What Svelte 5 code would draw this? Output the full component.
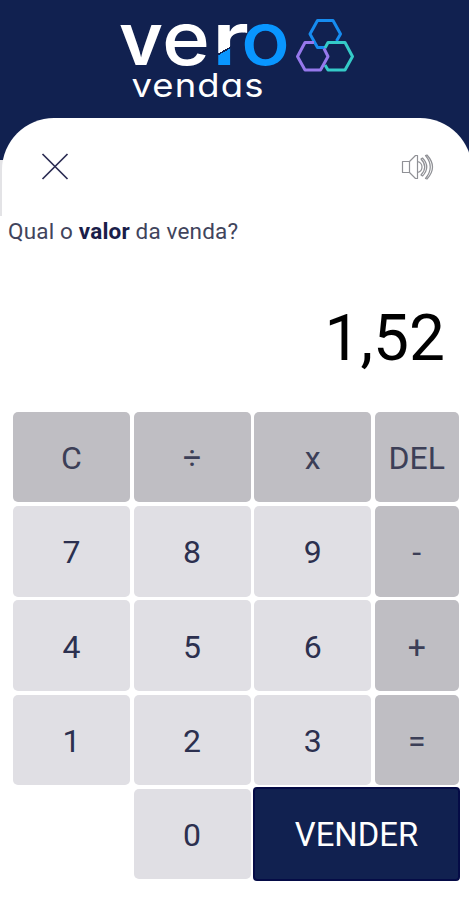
<script>
    const keys = [
        { label: 'C', dark: true },
        { label: '÷', dark: true },
        { label: 'x', dark: true },
        { label: 'DEL', dark: true },
        { label: '7' },
        { label: '8' },
        { label: '9' },
        { label: '-', dark: true },
        { label: '4' },
        { label: '5' },
        { label: '6' },
        { label: '+', dark: true },
        { label: '1' },
        { label: '2' },
        { label: '3' },
        { label: '=', dark: true },
    ];

    let value = '1,52';
</script>

<style>
    :global(body) {
        background: #fff;
    }

    .app {
        width: 469px;
        height: 900px;
        overflow: hidden;
        background: #fff;
        font-family: Roboto, "Liberation Sans", sans-serif;
        color: #20244a;
    }

    header {
        height: 118px;
        background: #112150;
    }

    header svg {
        display: block;
        overflow: visible;
    }

    /* cv11 is the single-storey "a" */
    .logo {
        font-family: Inter, sans-serif;
        font-feature-settings: "cv11";
    }

    /* navy behind the rounded corners, then a thin grey edge on the left */
    .sheet {
        height: 98px;
        background: linear-gradient(#112150 42px, #e3e3e6 42px);
    }

    .bar {
        display: flex;
        justify-content: space-between;
        box-sizing: border-box;
        height: 98px;
        margin-left: 2px;
        margin-right: -3px;
        padding: 34px 36px 0 38px;
        border-radius: 52px 52px 0 0;
        background: #fff;
    }

    .icon {
        height: 30px;
        padding: 0;
        border: none;
        background: none;
    }

    .icon svg {
        display: block;
    }

    .question {
        margin: 0;
        padding: 2px 0 0 8px;
        font-size: 22.5px;
        line-height: 26px;
        letter-spacing: 0.17px;
        white-space: nowrap;
        color: #41445c;
    }

    .question b {
        color: #1a1d49;
    }

    .value {
        height: 168px;
        padding-right: 24px;
        font-size: 64px;
        line-height: 190px;
        text-align: right;
        color: #000;
    }

    .keypad {
        display: grid;
        grid-template-columns: 117px 117px 117px 84px;
        grid-auto-rows: 90.4px;
        gap: 3.8px 3.6px;
        padding-left: 13px;
    }

    .key {
        padding: 2px 0 0;
        border: none;
        border-radius: 5px;
        background: #e0dfe4;
        font: inherit;
        font-size: 32px;
        line-height: 88px;
        color: #2c304f;
    }

    .key.dark {
        background: #bfbec3;
        color: #3c3f57;
    }

    .zero {
        grid-column: 2;
    }

    .sell {
        grid-column: 3 / 5;
        margin: -2px -1.5px;
        padding: 3px 0 0;
        border: 2px solid #050b46;
        border-radius: 4px;
        background: #112150;
        font: inherit;
        font-size: 32.8px;
        color: #fff;
    }
</style>

<div class="app">
    <header>
        <svg class="logo" width="469" height="118" viewBox="0 0 469 118">
            <defs>
                <linearGradient id="stem" gradientUnits="userSpaceOnUse" x1="220" y1="45" x2="228" y2="59">
                    <stop offset="0.4" stop-color="#fff" />
                    <stop offset="0.4" stop-color="#112150" />
                    <stop offset="0.5" stop-color="#112150" />
                    <stop offset="0.5" stop-color="#0996ff" />
                </linearGradient>
            </defs>
            <g font-size="74" font-weight="500" fill="#fff">
                <text x="119" y="65" font-weight="600" textLength="44" lengthAdjust="spacingAndGlyphs">v</text>
                <text x="162" y="65" textLength="48" lengthAdjust="spacingAndGlyphs">e</text>
                <text x="212" y="65" font-weight="600" textLength="37" lengthAdjust="spacingAndGlyphs" fill="url(#stem)">r</text>
                <text x="241" y="65" textLength="49" lengthAdjust="spacingAndGlyphs" fill="#0996ff">o</text>
            </g>
            <text x="131.500" y="97" font-size="33" letter-spacing="1" fill="#fff" textLength="133" lengthAdjust="spacingAndGlyphs">vendas</text>
            <g fill="none" stroke-width="3" stroke-linejoin="round">
                <path stroke="#168cf0" d="M325 47.500h-7.500L310 34l7.500-13.500H333l7.500 13.500-4 7" />
                <path stroke="#35cbc8" d="M325 48l3-5.500h17l7.500 14-7.500 13.500h-17l-3-5" />
                <path stroke="#9678ec" d="M314 42.500h-9l-7.500 14L305 70h15.500l7.500-13.500-4-8" />
            </g>
        </svg>
    </header>

    <div class="sheet">
        <div class="bar">
            <button class="icon" aria-label="Fechar">
                <svg width="30" height="30" fill="none" stroke="#2b2c52" stroke-width="1.7">
                    <path d="M2.500 2l25 25M27.500 2l-25 25" />
                </svg>
            </button>
            <button class="icon" aria-label="Som">
                <svg width="36" height="30" fill="none" stroke="#909196" stroke-width="1.2" stroke-linejoin="round">
                    <path d="M2.500 9.500h7v11h-7zM9.500 9.500l6-6h2v23h-2l-6-6" />
                    <path d="M17.500 9.500c6 1.500 6 9.500 0 11" />
                    <path d="M21 7q7.500 8 0 16l1.500 1q8.500-9 0-18z" />
                    <path d="M25.500 3.500q9.500 11.500 0 23l1.500.5q11-12 0-24z" />
                </svg>
            </button>
        </div>
    </div>

    <p class="question">Qual o <b>valor</b> da venda?</p>
    <div class="value">{value}</div>

    <div class="keypad">
        {#each keys as key}
            <button class="key" class:dark={key.dark}>{key.label}</button>
        {/each}
        <button class="key zero">0</button>
        <button class="sell">VENDER</button>
    </div>
</div>
